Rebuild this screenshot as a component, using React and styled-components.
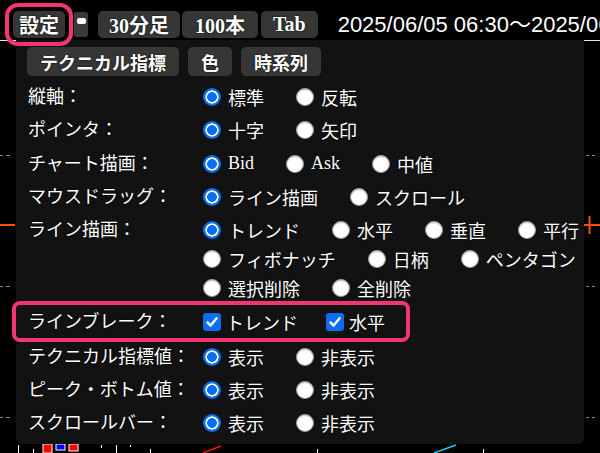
import React from "react";
import styled, { createGlobalStyle, css } from "styled-components";

const GlobalStyle = createGlobalStyle`
  html, body {
    margin: 0;
    padding: 0;
    background: #000;
  }
  body {
    width: 600px;
    height: 453px;
    overflow: hidden;
  }
`;

const serif = `"Liberation Serif", "Noto Sans CJK JP", serif`;
const pink = "#f2346f";
const blue = "#0a6ef5";

const Screen = styled.div`
  width: 600px;
  height: 453px;
  background: #000;
  color: #fff;
  font-family: ${serif};
  display: flex;
  flex-direction: column;
`;

const Toolbar = styled.div`
  height: 40px;
  flex: none;
  box-sizing: border-box;
  padding: 11px 0 0 13px;
  display: flex;
  align-items: flex-start;

  & > * {
    flex: none;
  }
`;

const ToolButton = styled.div`
  height: 27px;
  padding: 0 ${({ $pad }) => $pad ?? 11}px;
  margin-left: ${({ $gap }) => $gap ?? 2}px;
  display: flex;
  align-items: center;
  box-sizing: border-box;
  background: #363636;
  border-radius: 5px;
  font-size: 20px;
  font-weight: 700;
  white-space: nowrap;
  text-shadow: 0 0 2px #000;

  ${({ $marked }) =>
    $marked &&
    css`
      position: relative;
      z-index: 3;
      outline: 4px solid ${pink};
      outline-offset: 4px;
    `}
`;

const MiniButton = styled.div`
  width: 14px;
  height: 25px;
  margin: 1px 0 0 9px;
  background: #3a3a3a;
  border-radius: 3px;
  display: flex;
  justify-content: center;
  align-items: flex-start;
  padding-top: 6px;
  box-sizing: border-box;
`;

const MiniBar = styled.span`
  display: block;
  width: 9px;
  height: 6px;
  background: #fff;
  border-radius: 2px;
`;

const DateRange = styled.div`
  margin-left: 20px;
  font-family: "Liberation Sans", "Noto Sans CJK JP", sans-serif;
  font-size: 22px;
  line-height: 28px;
  white-space: nowrap;
`;

const ChartArea = styled.div`
  position: relative;
  flex: 1;
`;

const ChartSvg = styled.svg`
  display: block;
`;

const Panel = styled.div`
  position: absolute;
  left: 16px;
  top: 0;
  width: 568px;
  height: 404px;
  box-sizing: border-box;
  padding-top: 7px;
  background: #121212;
  border-radius: 0 0 6px 6px;
  z-index: 1;
`;

const TabRow = styled.div`
  display: flex;
  gap: 9px;
  padding-left: 11px;
  margin-bottom: 4px;
`;

const TabButton = styled.div`
  height: 29px;
  padding: 0 13px;
  display: flex;
  align-items: center;
  background: #363636;
  border-radius: 5px;
  font-size: 18px;
  font-weight: 700;
  text-shadow: 0 0 2px #000;
`;

const SettingRow = styled.div`
  display: grid;
  grid-template-columns: 175px 1fr;
  align-items: start;
  padding: 4.5px 0 4.5px 12px;
  min-height: ${({ $tall }) => ($tall ? 34 : 33)}px;
  box-sizing: border-box;

  ${({ $highlight }) =>
    $highlight &&
    css`
      width: 390px;
      outline: 4px solid ${pink};
      border-radius: 4px;
      margin: 1px 0 2px;
    `}
`;

const Label = styled.div`
  font-size: 18px;
  line-height: 24px;
  white-space: nowrap;
  text-shadow: 0 0 2px #000;
`;

const OptionLines = styled.div`
  display: flex;
  flex-direction: column;
  gap: 5px;
`;

const OptionLine = styled.div`
  display: flex;
  gap: ${({ $gap }) => $gap}px;
`;

const Option = styled.label`
  display: flex;
  align-items: center;
  gap: ${({ $gap }) => $gap}px;
  height: 24px;
  font-size: 18px;
  white-space: nowrap;
  text-shadow: 0 0 2px #000;
`;

const Radio = styled.span`
  width: 18px;
  height: 18px;
  border-radius: 50%;
  box-sizing: border-box;
  flex: none;
  ${({ $checked }) =>
    $checked
      ? css`
          background: radial-gradient(
            circle,
            ${blue} 0 4.6px,
            #fff 5.2px 6.3px,
            ${blue} 6.9px
          );
        `
      : css`
          background: #fff;
          border: 1px solid #9a9a9a;
          box-shadow: inset 0 1px 1px rgba(0, 0, 0, 0.25);
        `}
`;

const Checkbox = styled.span`
  width: 18px;
  height: 18px;
  border-radius: 3px;
  background: ${blue};
  flex: none;
  display: flex;
  align-items: center;
  justify-content: center;
`;

const rows = [
  { label: "縦軸：", lines: [["標準", "反転"]] },
  { label: "ポインタ：", lines: [["十字", "矢印"]], tall: true },
  { label: "チャート描画：", lines: [["Bid", "Ask", "中値"]] },
  { label: "マウスドラッグ：", lines: [["ライン描画", "スクロール"]] },
  {
    label: "ライン描画：",
    lines: [
      ["トレンド", "水平", "垂直", "平行"],
      ["フィボナッチ", "日柄", "ペンタゴン"],
      ["選択削除", "全削除"],
    ],
  },
  {
    label: "ラインブレーク：",
    type: "checkbox",
    highlight: true,
    lines: [["トレンド", "水平"]],
  },
  { label: "テクニカル指標値：", lines: [["表示", "非表示"]] },
  { label: "ピーク・ボトム値：", lines: [["表示", "非表示"]] },
  { label: "スクロールバー：", lines: [["表示", "非表示"]] },
];

const CheckMark = () => (
  <svg width="14" height="14" viewBox="0 0 14 14">
    <path
      d="M2.5 7.4 L5.6 10.6 L11.6 3.2"
      fill="none"
      stroke="#fff"
      strokeWidth="2.4"
      strokeLinecap="round"
      strokeLinejoin="round"
    />
  </svg>
);

const Chart = () => (
  <ChartSvg width="600" height="413" viewBox="0 0 600 413">
    <line x1="0" y1="0.5" x2="600" y2="0.5" stroke="#e6e6e6" strokeWidth="1" />
    {[115, 246, 377].map((y) => (
      <g key={y} stroke="#8a8a8a" strokeWidth="1">
        <line x1="0" y1={y + 0.5} x2="3" y2={y + 0.5} />
        <line x1="6" y1={y + 0.5} x2="10" y2={y + 0.5} />
        <line x1="586" y1={y + 0.5} x2="589" y2={y + 0.5} />
        <line x1="592" y1={y + 0.5} x2="595" y2={y + 0.5} />
      </g>
    ))}
    <g stroke="#ff4d0a" strokeWidth="2">
      <line x1="0" y1="185" x2="15" y2="185" />
      <line x1="584" y1="185" x2="600" y2="185" />
      <line x1="589.5" y1="176" x2="589.5" y2="194" />
    </g>
    <g stroke="#fff" strokeWidth="1">
      <line x1="18.5" y1="405" x2="18.5" y2="413" />
      <line x1="33.5" y1="409" x2="33.5" y2="413" />
      <line x1="101.5" y1="405" x2="101.5" y2="408" />
      <line x1="116.5" y1="405" x2="116.5" y2="413" />
      <line x1="130.5" y1="405" x2="130.5" y2="407" />
      <line x1="150.5" y1="409" x2="150.5" y2="413" />
      <line x1="317.5" y1="409" x2="317.5" y2="413" />
      <line x1="483.5" y1="409" x2="483.5" y2="413" />
    </g>
    <rect x="43" y="404" width="9" height="9" fill="#ff0000" stroke="#fff" strokeWidth="1" />
    <rect x="56" y="404" width="9" height="6" fill="#0000ff" stroke="#fff" strokeWidth="1" />
    <rect x="69" y="404" width="9" height="7" fill="#ff0000" stroke="#fff" strokeWidth="1" />
    <line x1="203" y1="413" x2="221" y2="406" stroke="#ff1010" strokeWidth="1.5" />
    <line x1="434" y1="413" x2="456" y2="405" stroke="#19c8ff" strokeWidth="1.5" />
  </ChartSvg>
);

const App = () => {
  return (
    <Screen>
      <GlobalStyle />
      <Toolbar>
        <ToolButton $marked $pad={6} $gap={0}>
          設定
        </ToolButton>
        <MiniButton>
          <MiniBar />
        </MiniButton>
        <ToolButton $gap={10}>30分足</ToolButton>
        <ToolButton $pad={13}>100本</ToolButton>
        <ToolButton $gap={3} $pad={12}>
          Tab
        </ToolButton>
        <DateRange>2025/06/05 06:30～2025/06/05 08:10</DateRange>
      </Toolbar>

      <ChartArea>
        <Chart />
        <Panel>
          <TabRow>
            <TabButton>テクニカル指標</TabButton>
            <TabButton>色</TabButton>
            <TabButton>時系列</TabButton>
          </TabRow>

          {rows.map((row) => {
            const isCheck = row.type === "checkbox";
            return (
              <SettingRow
                key={row.label}
                $highlight={row.highlight}
                $tall={row.tall}
              >
                <Label>{row.label}</Label>
                <OptionLines>
                  {row.lines.map((line, li) => (
                    <OptionLine key={li} $gap={isCheck ? 28 : 32}>
                      {line.map((opt, oi) => (
                        <Option key={opt} $gap={isCheck ? 5 : 7}>
                          {isCheck ? (
                            <Checkbox>
                              <CheckMark />
                            </Checkbox>
                          ) : (
                            <Radio $checked={li === 0 && oi === 0} />
                          )}
                          {opt}
                        </Option>
                      ))}
                    </OptionLine>
                  ))}
                </OptionLines>
              </SettingRow>
            );
          })}
        </Panel>
      </ChartArea>
    </Screen>
  );
};

export default App;
